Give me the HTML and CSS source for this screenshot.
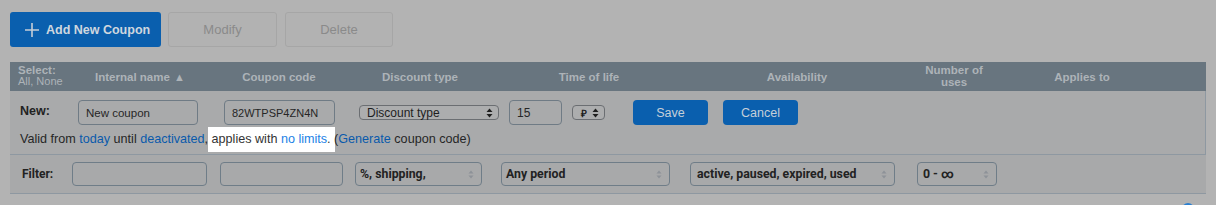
FILE: index.html
```html
<!DOCTYPE html>
<html>
<head>
<meta charset="utf-8">
<link rel="stylesheet" href="styles.css">
</head>
<body>
<div class="page">
  <div class="toolbar">
    <button class="btn btn-primary"><svg class="plus" width="14" height="14" viewBox="0 0 14 14"><path d="M7 0v14M0 7h14" stroke="currentColor" stroke-width="1.6" fill="none"/></svg>Add New Coupon</button>
    <button class="btn btn-disabled btn-modify">Modify</button>
    <button class="btn btn-disabled btn-delete">Delete</button>
  </div>

  <div class="table">
    <div class="thead">
      <div class="th th-select"><div class="sel-title">Select:</div><div class="sel-links">All, None</div></div>
      <div class="th">Internal name <span class="sort">▲</span></div>
      <div class="th">Coupon code</div>
      <div class="th">Discount type</div>
      <div class="th">Time of life</div>
      <div class="th">Availability</div>
      <div class="th th-two">Number of<br>uses</div>
      <div class="th">Applies to</div>
      <div class="th"></div>
    </div>

    <div class="new-row">
      <div class="new-controls">
        <span class="new-label">New:</span>
        <div class="field f-name">New coupon</div>
        <div class="field f-code">82WTPSP4ZN4N</div>
        <div class="mini-select ms-type"><span>Discount type</span><svg width="7" height="10" viewBox="0 0 7 10"><path d="M3.5 0.5L6.5 4H0.5z M3.5 9.5L6.5 6H0.5z" fill="#1e1e1e"/></svg></div>
        <div class="field f-life">15</div>
        <div class="mini-select ms-cur"><span>₽</span><svg width="7" height="10" viewBox="0 0 7 10"><path d="M3.5 0.5L6.5 4H0.5z M3.5 9.5L6.5 6H0.5z" fill="#1e1e1e"/></svg></div>
        <button class="btn btn-small btn-save">Save</button>
        <button class="btn btn-small btn-cancel">Cancel</button>
      </div>
      <div class="valid-line">Valid from <a class="lnk">today</a> until <a class="lnk">deactivated</a>,<span class="spot"> applies with <a class="lnk-hl">no limits</a>.</span> (<a class="lnk">Generate</a> coupon code)</div>
    </div>

    <div class="filter-row">
      <span class="filter-label">Filter:</span>
      <div class="ffield ff-name"></div>
      <div class="ffield ff-code"></div>
      <div class="fselect fs-type"><span>%, shipping,</span><svg width="6" height="9" viewBox="0 0 6 9"><path d="M3 0.5L5.5 3.5H0.5z M3 8.5L5.5 5.5H0.5z" fill="#8d9298"/></svg></div>
      <div class="fselect fs-period"><span>Any period</span><svg width="6" height="9" viewBox="0 0 6 9"><path d="M3 0.5L5.5 3.5H0.5z M3 8.5L5.5 5.5H0.5z" fill="#8d9298"/></svg></div>
      <div class="fselect fs-avail"><span>active, paused, expired, used</span><svg width="6" height="9" viewBox="0 0 6 9"><path d="M3 0.5L5.5 3.5H0.5z M3 8.5L5.5 5.5H0.5z" fill="#8d9298"/></svg></div>
      <div class="fselect fs-uses"><span>0 - ∞</span><svg width="6" height="9" viewBox="0 0 6 9"><path d="M3 0.5L5.5 3.5H0.5z M3 8.5L5.5 5.5H0.5z" fill="#8d9298"/></svg></div>
    </div>
  </div>
  <div class="footer"><span class="help-dot"></span></div>
</div>
</body>
</html>
```

FILE: styles.css
```css
* { box-sizing: border-box; }
html, body { margin: 0; padding: 0; }
body {
  background: #b3b3b3;
  font-family: "Liberation Sans", Arial, sans-serif;
  color: #262626;
  width: 1216px;
  height: 205px;
  overflow: hidden;
}
.page { padding: 12px 10px 0 10px; }

.toolbar { display: flex; gap: 7px; height: 35px; }
.btn {
  font-family: "Liberation Sans", Arial, sans-serif;
  border-radius: 3px;
  border: 1px solid transparent;
  display: flex; align-items: center; justify-content: center;
  padding: 0;
  cursor: default;
}
.btn-primary {
  width: 151px; height: 35px;
  background: #0a5fae;
  color: #cfd7df;
  font-weight: bold;
  font-size: 12.5px;
  gap: 7px;
  justify-content: flex-start;
  padding-left: 14px;
}
.plus { color: #c6ced7; }
.btn-disabled {
  height: 35px;
  background: #b2b2b2;
  border-color: #a6a6a6;
  color: #8a8a8a;
  font-size: 13px;
}
.btn-modify { width: 109px; }
.btn-delete { width: 108px; margin-left: 1px; }

.table { margin-top: 15px; width: 1196px; }
.thead {
  display: grid;
  grid-template-columns: 60px 140px 138px 144px 194px 222px 92px 164px 42px;
  height: 29px;
  background: #68757f;
  color: #adb3b8;
  font-weight: bold;
  font-size: 11.5px;
  align-items: center;
}
.th { text-align: center; }
.th-select { text-align: left; padding-left: 8px; line-height: 11px; margin-top: -2px; }
.sel-title { font-size: 11.5px; }
.sel-links { font-weight: normal; font-size: 11px; }
.th-two { line-height: 12px; margin-top: -1px; }
.sort { font-size: 11px; vertical-align: 0px; margin-left: 1px; }

.new-row {
  height: 64px;
  background: #a9aaab;
  border-right: 1px solid #8e98a1;
  border-bottom: 1px solid #8e98a1;
  padding-top: 9px;
}
.new-controls { display: flex; align-items: center; height: 25px; }
.new-label { font-weight: bold; font-size: 12.5px; margin-left: 10px; width: 58px; color: #222; margin-top: -3px; }
.field {
  height: 25px;
  border: 1px solid #6f7b85;
  border-radius: 4px;
  font-size: 11.5px;
  padding-left: 7px;
  display: flex; align-items: center;
  color: #262626;
  background: #a9aaab;
}
.f-name { width: 120px; }
.f-code { width: 111px; margin-left: 26px; font-size: 11px; }
.f-life { width: 53px; margin-left: 10px; font-size: 12px; }
.mini-select {
  height: 15px;
  border: 1px solid #6b6e72;
  border-radius: 4px;
  background: #acadae;
  font-size: 12px;
  display: flex; align-items: center; justify-content: space-between;
  padding: 0 5px 0 7px;
  color: #1e1e1e;
}
.ms-type { width: 140px; margin-left: 24px; }
.ms-cur { width: 33px; margin-left: 10px; font-size: 10px; font-weight: bold; padding-left: 8px; }
.btn-small {
  height: 25px; width: 75px;
  background: #0a5fae;
  border-radius: 4px;
  color: #c5cfd9;
  font-size: 12.5px;
}
.btn-save { margin-left: 28px; }
.btn-cancel { margin-left: 15px; }

.valid-line {
  margin-top: 7px;
  margin-left: 10px;
  font-size: 12.6px;
  color: #262626;
}
.lnk { color: #0a5aab; }
.spot {
  background: #ffffff;
  color: #333333;
  padding: 5px 4px 6px 0;
  margin: 0 -4px 0 0;
}
.lnk-hl { color: #1c82e6; }

.filter-row {
  height: 39px;
  background: #a8a9aa;
  border-bottom: 1px solid #8e98a1;
  display: flex; align-items: center;
  font-family: Roboto, "Liberation Sans", sans-serif;
}
.filter-label { font-weight: bold; font-size: 12px; margin-left: 12px; width: 50px; color: #222; }
.ffield, .fselect {
  height: 24px;
  border: 1px solid #6f7d88;
  border-radius: 4px;
  background: #a8a9aa;
}
.ff-name { width: 135px; }
.ff-code { width: 123px; margin-left: 13px; }
.fselect {
  display: flex; align-items: center; justify-content: space-between;
  padding: 0 7px 0 4px;
  font-size: 12.3px; font-weight: bold; color: #222;
}
.fs-type { width: 127px; margin-left: 12px; }
.fs-period { width: 169px; margin-left: 19px; }
.fs-avail { width: 205px; margin-left: 20px; padding-left: 6px; }
.fs-uses { width: 80px; margin-left: 22px; padding-left: 5px; }

.footer { display: flex; justify-content: flex-end; height: 20px; padding-right: 12px; }
.help-dot { width: 12px; height: 12px; border-radius: 50%; background: #2a7fd0; margin-top: 9px; }
```
